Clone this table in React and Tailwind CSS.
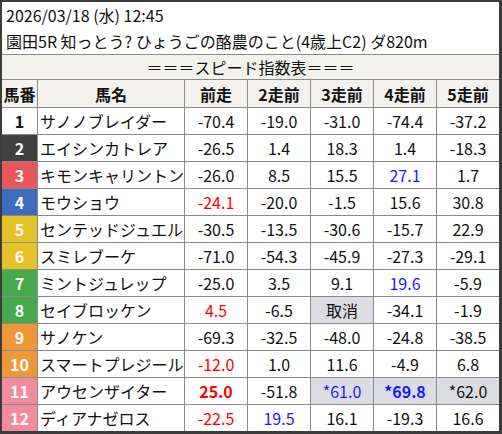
import React from "react";

const frameColors = {
  1: "bg-white text-[#111]",
  2: "bg-[#404040] text-white",
  3: "bg-[#e8585a] text-white",
  4: "bg-[#3d6bbd] text-white",
  5: "bg-[#e6c229] text-white",
  6: "bg-[#e6c229] text-white",
  7: "bg-[#48aa4c] text-white",
  8: "bg-[#48aa4c] text-white",
  9: "bg-[#ef983a] text-white",
  10: "bg-[#ef983a] text-white",
  11: "bg-[#f08c9e] text-white",
  12: "bg-[#f08c9e] text-white",
};

// each value: [text, color, bold, gray]
const R = "r", B = "b";
const rows = [
  [1, "サノノブレイダー", [["-70.4"], ["-19.0"], ["-31.0"], ["-74.4"], ["-37.2"]]],
  [2, "エイシンカトレア", [["-26.5"], ["1.4"], ["18.3"], ["1.4"], ["-18.3"]]],
  [3, "キモンキャリントン", [["-26.0"], ["8.5"], ["15.5"], ["27.1", B], ["1.7"]]],
  [4, "モウショウ", [["-24.1", R], ["-20.0"], ["-1.5"], ["15.6"], ["30.8"]]],
  [5, "センテッドジュエル", [["-30.5"], ["-13.5"], ["-30.6"], ["-15.7"], ["22.9"]]],
  [6, "スミレブーケ", [["-71.0"], ["-54.3"], ["-45.9"], ["-27.3"], ["-29.1"]]],
  [7, "ミントジュレップ", [["-25.0"], ["3.5"], ["9.1"], ["19.6", B], ["-5.9"]]],
  [8, "セイブロッケン", [["4.5", R], ["-6.5"], ["取消", null, false, true], ["-34.1"], ["-1.9"]]],
  [9, "サノケン", [["-69.3"], ["-32.5"], ["-48.0"], ["-24.8"], ["-38.5"]]],
  [10, "スマートプレジール", [["-12.0", R], ["1.0"], ["11.6"], ["-4.9"], ["6.8"]]],
  [11, "アウセンザイター", [["25.0", R, true], ["-51.8"], ["*61.0", B, false, true], ["*69.8", B, true, true], ["*62.0", null, false, true]]],
  [12, "ディアナゼロス", [["-22.5", R], ["19.5", B], ["16.1"], ["-19.3"], ["16.6"]]],
];

const headers = ["馬番", "馬名", "前走", "2走前", "3走前", "4走前", "5走前"];

function ValCell({ v }) {
  const [t, c, bold, gray] = v;
  const color = c === R ? "text-[#ff0000]" : c === B ? "text-[#1a1aff]" : "text-[#111]";
  return (
    <div
      className={`flex items-center justify-center ${gray ? "bg-[#dcdde2]" : "bg-white"} ${color} ${bold ? "font-bold" : ""}`}
    >
      {t}
    </div>
  );
}

export default function App() {
  return (
    <div
      className="w-[502px] h-[434px] bg-white border-solid border-[#3c3c3c] border-t-2 border-l-2 border-r-[3px] border-b-[3px] flex flex-col text-[16px] text-[#111] overflow-hidden"
      style={{ fontFamily: '"Noto Sans CJK JP", "Noto Sans", sans-serif' }}
    >
      <div className="h-[52px] pl-[4px] leading-[26px] whitespace-nowrap">
        <div>2026/03/18 (水) 12:45</div>
        <div>園田5R 知っとう? ひょうごの酪農のこと(4歳上C2) ダ820m</div>
      </div>
      <div className="h-[25px] border-t border-solid border-[#8a8a8a] bg-[#f3f2ee] flex items-center justify-center leading-none">
        ＝＝＝スピード指数表＝＝＝
      </div>
      <div className="grid gap-px bg-[#8a8a8a] pt-px grid-cols-[35px_146px_62px_62px_62px_62px_62px] grid-rows-[27px_repeat(12,26px)] leading-none">
        {headers.map((h) => (
          <div key={h} className="bg-[#f3f2ee] font-bold flex items-center justify-center">
            {h}
          </div>
        ))}
        {rows.map(([n, name, vals]) => (
          <React.Fragment key={n}>
            <div className={`flex items-center justify-center font-bold ${frameColors[n]}`}>{n}</div>
            <div className="bg-white flex items-center pl-[2px] whitespace-nowrap">{name}</div>
            {vals.map((v, i) => (
              <ValCell key={i} v={v} />
            ))}
          </React.Fragment>
        ))}
      </div>
    </div>
  );
}
